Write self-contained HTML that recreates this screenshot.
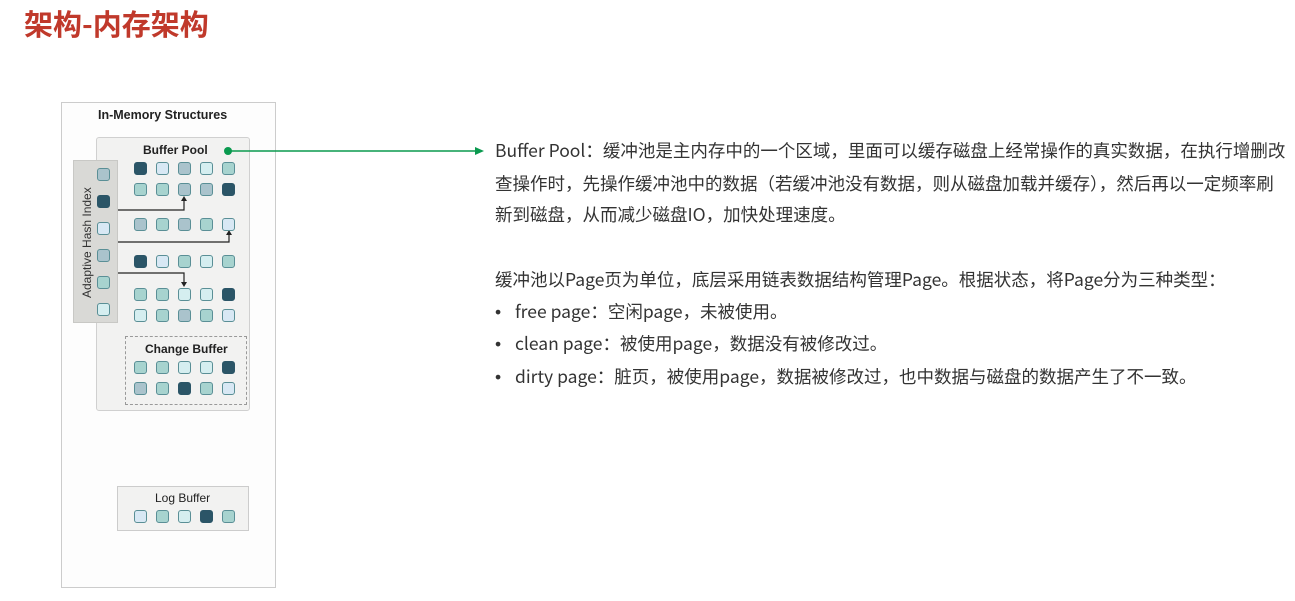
<!DOCTYPE html>
<html><head><meta charset="utf-8"><style>
body{margin:0;width:1295px;height:601px;background:#fff;position:relative;overflow:hidden;font-family:"Liberation Sans","Noto Sans CJK SC",sans-serif}
.a{position:absolute}
.t{position:absolute;left:495px;font-size:17.5px;color:#333;white-space:nowrap;line-height:20px;font-family:"Noto Sans CJK SC",sans-serif}
.t b{font-weight:normal;font-family:"Liberation Sans",sans-serif;display:inline-block;width:20px}
.s{position:absolute;width:13px;height:13px;border-radius:3px;border:1px solid #5a8f96;box-sizing:border-box}
.D{background:#2b5567;border-color:#2b5567}.B{background:#d8e8f4}.G{background:#aac3cc}.T{background:#a7d3cf}.P{background:#d5eef0}
.lb{position:absolute;font-size:12px;font-weight:bold;color:#222;white-space:nowrap}
</style></head><body>
<div class="a" style="left:24px;top:2px;font-size:29px;font-weight:bold;color:#c0392b;font-family:'Noto Sans CJK SC',sans-serif">架构-内存架构</div>

<div class="a" style="left:61px;top:102px;width:215px;height:486px;border:1px solid #ccc;box-sizing:border-box;background:#fdfdfd"></div>
<div class="lb" style="left:98px;top:108px;font-size:12.5px">In-Memory Structures</div>
<div class="a" style="left:96px;top:137px;width:154px;height:274px;border:1px solid #d0d0d0;border-radius:3px;background:#f2f2f1;box-sizing:border-box"></div>
<div class="lb" style="left:143px;top:143px;font-weight:bold">Buffer Pool</div>
<div class="a" style="left:73px;top:160px;width:45px;height:163px;background:#d9d9d6;border:1px solid #c8c8c5;box-sizing:border-box"></div>
<div class="a" style="left:80px;top:298px;transform:rotate(-90deg);transform-origin:0 0;font-size:12px;color:#333;white-space:nowrap">Adaptive Hash Index</div>
<div class="a" style="left:125px;top:336px;width:122px;height:69px;border:1px dashed #999;box-sizing:border-box"></div>
<div class="lb" style="left:145px;top:342px">Change Buffer</div>
<div class="a" style="left:117px;top:486px;width:132px;height:45px;border:1px solid #ccc;background:#f2f2f1;box-sizing:border-box"></div>
<div class="lb" style="left:155px;top:491px;font-weight:normal;color:#222">Log Buffer</div>

<svg class="a" style="left:0;top:0" width="1295" height="601">
<g stroke="#222" stroke-width="1.2" fill="none">
<path d="M118 210H184V199"/><path d="M118 242H229V233"/><path d="M118 273H184V284"/>
</g>
<g fill="#222"><path d="M184 196l-3 5h6z"/><path d="M229 230l-3 5h6z"/><path d="M184 287l-3-5h6z"/></g>
<line x1="227" y1="151" x2="476" y2="151" stroke="#0a9a4f" stroke-width="1.6"/>
<path d="M484 151l-9-4v8z" fill="#0a9a4f"/>
<circle cx="228" cy="151" r="4" fill="#0a9a4f"/>
</svg>

<div id="sq"></div>
<script>
var rows=[[162,"DBGPT"],[183,"TTGGD"],[218,"GTGTB"],[255,"DBTPT"],[288,"TTPPD"],[309,"PTGTB"],[361,"TTPPD"],[382,"GTDTB"],[510,"BTPDT"]];
var xs=[134,156,178,200,222],h="";
rows.forEach(function(r){for(var i=0;i<5;i++)h+='<div class="s '+r[1][i]+'" style="left:'+xs[i]+'px;top:'+r[0]+'px"></div>';});
var ah="GDBGTP";for(var i=0;i<6;i++)h+='<div class="s '+ah[i]+'" style="left:97px;top:'+(168+i*27)+'px"></div>';
document.getElementById("sq").innerHTML=h;
</script>

<div class="t" style="top:141px">Buffer Pool：缓冲池是主内存中的一个区域，里面可以缓存磁盘上经常操作的真实数据，在执行增删改</div>
<div class="t" style="top:174px">查操作时，先操作缓冲池中的数据（若缓冲池没有数据，则从磁盘加载并缓存），然后再以一定频率刷</div>
<div class="t" style="top:205px">新到磁盘，从而减少磁盘IO，加快处理速度。</div>
<div class="t" style="top:270px">缓冲池以Page页为单位，底层采用链表数据结构管理Page。根据状态，将Page分为三种类型：</div>
<div class="t" style="top:302px"><b>•</b>free page：空闲page，未被使用。</div>
<div class="t" style="top:334px"><b>•</b>clean page：被使用page，数据没有被修改过。</div>
<div class="t" style="top:367px"><b>•</b>dirty page：脏页，被使用page，数据被修改过，也中数据与磁盘的数据产生了不一致。</div>
</body></html>
